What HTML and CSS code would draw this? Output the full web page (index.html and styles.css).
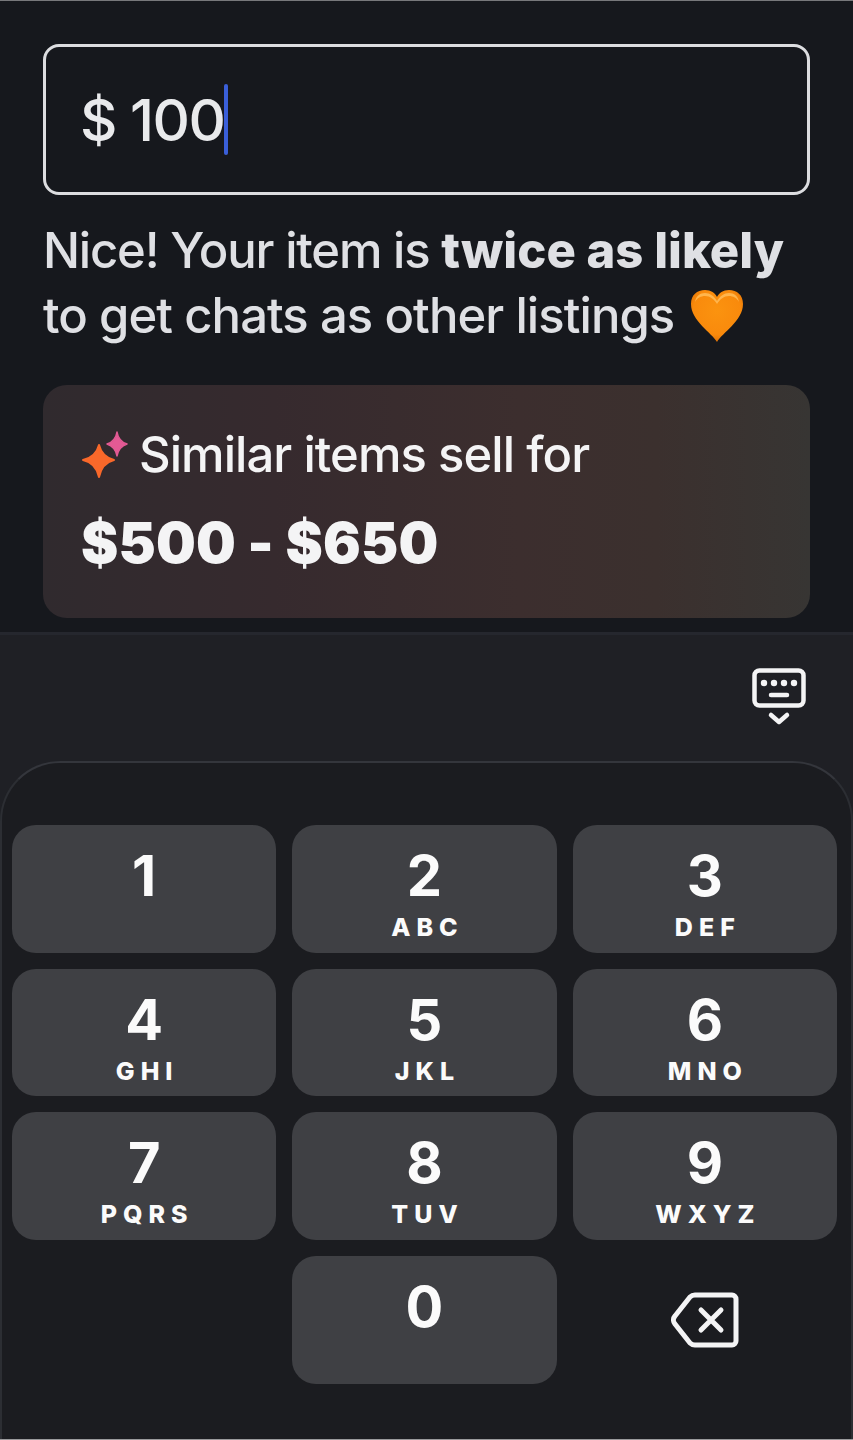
FILE: index.html
```html
<!DOCTYPE html>
<html>
<head>
    <title>Set a price</title>
    <link rel="stylesheet" href="styles.css">
</head>
<body>
    <div class="listing">
        <div class="price-input">
            <span class="price-value">$ 100</span><span class="caret"></span>
        </div>
        <p class="hint">Nice! Your item is <strong>twice as likely</strong><br><span class="hint-end">to get chats as other listings</span>
            <svg class="heart" viewBox="0 0 54 54">
                <defs>
                    <radialGradient id="heartFill" cx="0.5" cy="0.4" r="0.65">
                        <stop offset="0" stop-color="#fb930f"/>
                        <stop offset="0.7" stop-color="#f98a0c"/>
                        <stop offset="1" stop-color="#d96a02"/>
                    </radialGradient>
                </defs>
                <path d="M27 53C22 44 1 32 1 15 1 6 7 1 15 1c6 0 10 3 12 7 2-4 6-7 12-7 8 0 14 5 14 14 0 17-21 29-26 38z" fill="url(#heartFill)"/>
                <path d="M5 13c1-6 5-9 10-9 5 0 9 3 12 8 3-5 7-8 12-8 5 0 9 3 10 9-2-4-6-6-10-6-5 0-9 3-12 8-3-5-7-8-12-8-4 0-8 2-10 6z" fill="#ffb54d"/>
            </svg>
        </p>
        <div class="suggestion">
            <div class="suggestion-title">
                <svg class="sparkle" viewBox="0 0 48 48">
                    <path d="M36 1c1 6 4 10 10 12-6 2-9 6-10 12-1-6-4-10-10-12 6-2 9-6 10-12z" fill="#e35a94" stroke="#e35a94" stroke-width="1.5" stroke-linejoin="round"/>
                    <path d="M18 14c2 8 7 13 15 15-8 2-13 7-15 17-2-10-7-15-16-17 9-2 14-7 16-15z" fill="#f9682a" stroke="#f9682a" stroke-width="2" stroke-linejoin="round"/>
                </svg>
                <span>Similar items sell for</span>
            </div>
            <div class="suggestion-range">$500 - $650</div>
        </div>
    </div>

    <div class="keyboard">
        <div class="keyboard-bar">
            <svg class="keyboard-hide" viewBox="0 0 54 58" fill="none" stroke="#f4f4f5" stroke-linecap="round" stroke-linejoin="round">
                <rect x="2.5" y="2.5" width="49" height="35" rx="5" stroke-width="4.5"/>
                <g fill="#f4f4f5" stroke="none">
                    <circle cx="12" cy="15" r="3.2"/>
                    <circle cx="22" cy="15" r="3.2"/>
                    <circle cx="32" cy="15" r="3.2"/>
                    <circle cx="42" cy="15" r="3.2"/>
                </g>
                <path d="M19 27h16" stroke-width="4.5"/>
                <path d="M19 47l8 7 8-7" stroke-width="4.5"/>
            </svg>
        </div>
        <div class="keypad">
            <div class="key"><span class="digit">1</span></div>
            <div class="key"><span class="digit">2</span><span class="letters">ABC</span></div>
            <div class="key"><span class="digit">3</span><span class="letters">DEF</span></div>
            <div class="key"><span class="digit">4</span><span class="letters">GHI</span></div>
            <div class="key"><span class="digit">5</span><span class="letters">JKL</span></div>
            <div class="key"><span class="digit">6</span><span class="letters">MNO</span></div>
            <div class="key"><span class="digit">7</span><span class="letters">PQRS</span></div>
            <div class="key"><span class="digit">8</span><span class="letters">TUV</span></div>
            <div class="key"><span class="digit">9</span><span class="letters">WXYZ</span></div>
            <div class="key key-blank"></div>
            <div class="key"><span class="digit">0</span></div>
            <div class="key key-blank key-delete">
                <svg class="backspace" viewBox="0 0 68 56" fill="none" stroke="#f4f4f5" stroke-width="5" stroke-linecap="round" stroke-linejoin="round">
                    <path d="M24 3h37a4 4 0 0 1 4 4v42a4 4 0 0 1-4 4H24a7 7 0 0 1-5-2L4 32a6 6 0 0 1 0-8L19 5a7 7 0 0 1 5-2z"/>
                    <path d="M30 18l20 20M50 18L30 38"/>
                </svg>
            </div>
        </div>
    </div>
</body>
</html>
```
FILE: styles.css
```css
html, body {
    margin: 0;
    height: 1440px;
    overflow: hidden;
}
body {
    font-family: Inter, "Liberation Sans", sans-serif;
    background-color: #16181d;
    border-top: 1px solid #77787b;
    border-bottom: 1px solid #9a9a9c;
    box-sizing: border-box;
    display: flex;
    flex-direction: column;
}
.listing {
    height: 631px;
    box-sizing: border-box;
    padding: 43px 43px 0;
}
.price-input {
    height: 151px;
    box-sizing: border-box;
    border: 3px solid #dcdde0;
    border-radius: 16px;
    padding-left: 34px;
    display: flex;
    align-items: center;
    color: #e9eaec;
    font-size: 58px;
    font-weight: 500;
    letter-spacing: -1.5px;
}
.caret {
    width: 4px;
    height: 71px;
    background-color: #3a5fd9;
    border-radius: 2px;
}
.hint {
    margin: 23px 0 0;
    color: #dfe0e4;
    font-size: 49px;
    font-weight: 500;
    line-height: 65px;
    letter-spacing: -1.2px;
}
.hint strong {
    font-weight: 800;
    letter-spacing: 0;
}
.hint-end {
    letter-spacing: -0.93px;
}
.heart {
    width: 54px;
    height: 54px;
    vertical-align: -10px;
    margin-left: 4px;
}
.suggestion {
    margin-top: 37px;
    height: 233px;
    box-sizing: border-box;
    padding: 43px 38px 0;
    border-radius: 24px;
    background: linear-gradient(90deg, #302a2e 0%, #362a2e 30%, #3c2e2e 62%, #3b302e 80%, #373533 100%);
    color: #f4f4f5;
}
.suggestion-title {
    display: flex;
    align-items: center;
    gap: 10px;
    font-size: 49px;
    font-weight: 500;
    line-height: 54px;
    letter-spacing: -0.95px;
}
.sparkle {
    width: 48px;
    height: 48px;
}
.suggestion-range {
    margin-top: 31px;
    font-size: 56px;
    line-height: 60px;
    font-weight: 900;
    letter-spacing: 0.2px;
}
.keyboard {
    flex: 1;
    background-color: #1f2025;
    border-top: 3px solid #25272e;
    display: flex;
    flex-direction: column;
}
.keyboard-bar {
    height: 126px;
    box-sizing: border-box;
    padding: 33px 47px 0 0;
    display: flex;
    justify-content: flex-end;
}
.keyboard-hide {
    width: 54px;
    height: 58px;
}
.keypad {
    flex: 1;
    box-sizing: border-box;
    padding: 62px 14px 0 10px;
    background-color: #1b1c20;
    border-top: 2px solid #34363c;
    border-left: 2px solid #2c2e33;
    border-right: 2px solid #2c2e33;
    border-radius: 60px 60px 0 0;
    display: grid;
    grid-template-columns: repeat(3, 1fr);
    grid-auto-rows: 127.67px;
    gap: 16px;
    align-content: start;
}
.key {
    background-color: #3f4044;
    border-radius: 24px;
    color: #fbfbfb;
    display: flex;
    flex-direction: column;
    align-items: center;
    box-sizing: border-box;
    padding-top: 18px;
}
.key-blank {
    background: none;
}
.key-delete {
    padding-top: 36px;
}
.backspace {
    width: 68px;
    height: 56px;
}
.digit {
    font-size: 56px;
    line-height: 66px;
    font-weight: 700;
}
.letters {
    font-size: 25px;
    line-height: 30px;
    margin-top: 3px;
    font-weight: 800;
    letter-spacing: 6px;
    margin-right: -6px;
}
```
